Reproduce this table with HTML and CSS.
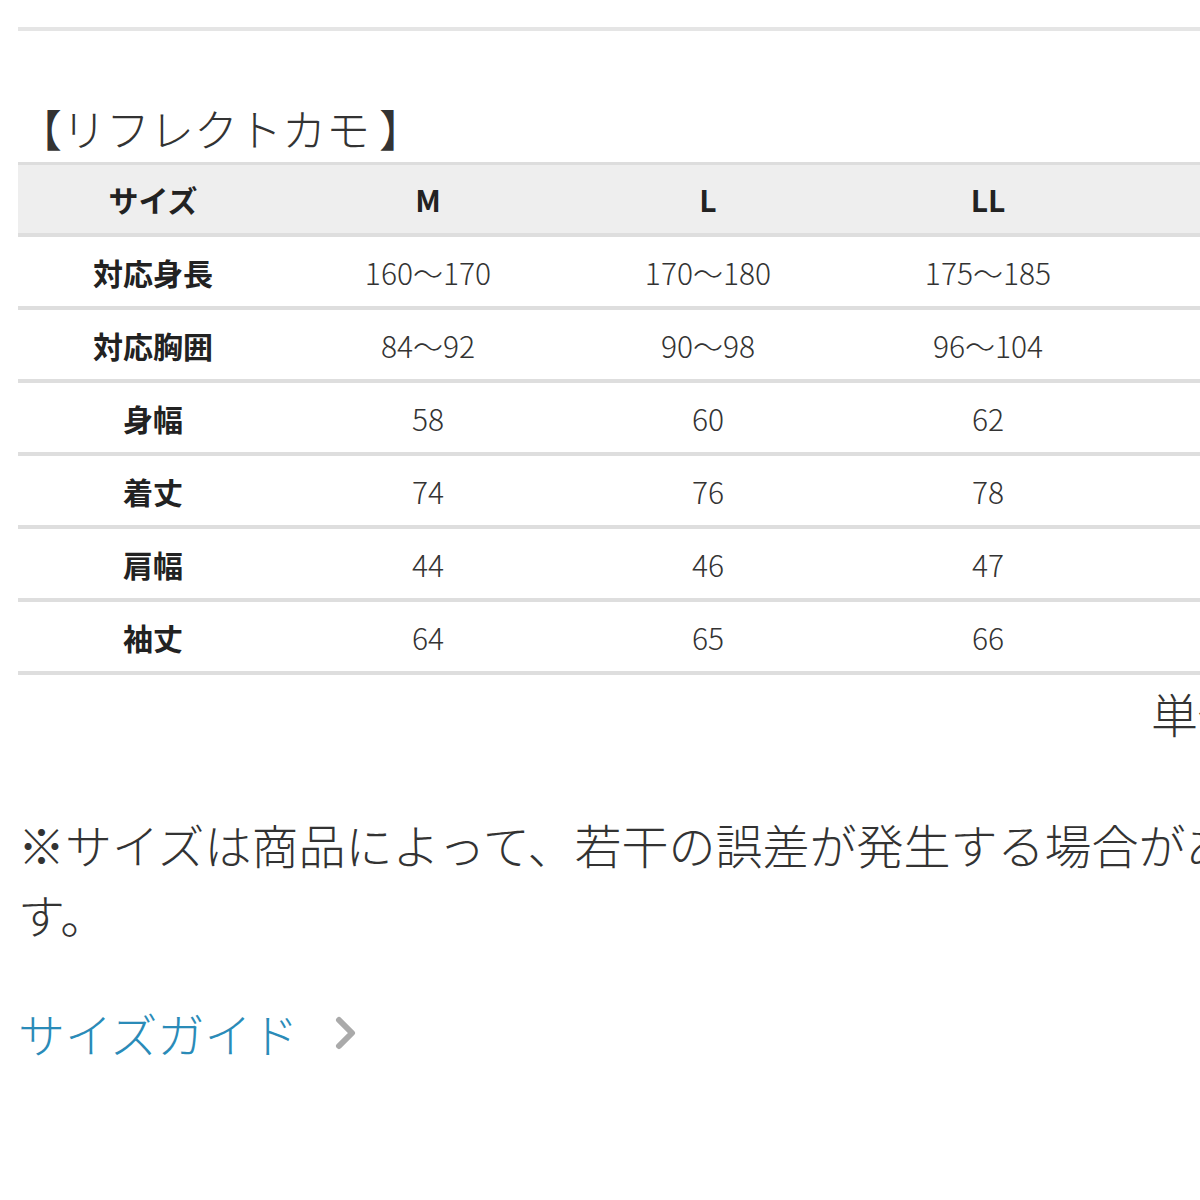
FILE: index.html
```html
<!DOCTYPE html>
<html lang="ja">
<head>
<meta charset="utf-8">
<title>サイズ表</title>
<link rel="stylesheet" href="styles.css">
</head>
<body>
<div class="page">
  <div class="top-rule"></div>
  <h2 class="title"><span class="br-open">【</span>リフレクトカモ<span class="br-close">】</span></h2>
  <table class="size-table">
    <colgroup>
      <col class="c-label"><col class="c-val"><col class="c-val"><col class="c-val"><col class="c-val">
    </colgroup>
    <thead>
      <tr><th>サイズ</th><th>M</th><th>L</th><th>LL</th><th></th></tr>
    </thead>
    <tbody>
      <tr><th>対応身長</th><td>160〜170</td><td>170〜180</td><td>175〜185</td><td></td></tr>
      <tr><th>対応胸囲</th><td>84〜92</td><td>90〜98</td><td>96〜104</td><td></td></tr>
      <tr><th>身幅</th><td>58</td><td>60</td><td>62</td><td></td></tr>
      <tr><th>着丈</th><td>74</td><td>76</td><td>78</td><td></td></tr>
      <tr><th>肩幅</th><td>44</td><td>46</td><td>47</td><td></td></tr>
      <tr><th>袖丈</th><td>64</td><td>65</td><td>66</td><td></td></tr>
    </tbody>
  </table>
  <div class="unit">単位：cm</div>
  <p class="note">※サイズは商品によって、若干の誤差が発生する場合があります。</p>
  <a class="guide" href="#">サイズガイド<svg class="chev" width="26" height="36" viewBox="0 0 26 36"><path d="M6 5 L19 18 L6 31" fill="none" stroke="#aaaaaa" stroke-width="6" stroke-linecap="round" stroke-linejoin="round"/></svg></a>
</div>
</body>
</html>
```
FILE: styles.css
```css
html, body {
  margin: 0;
  padding: 0;
  background: #ffffff;
  overflow: hidden;
}
body {
  width: 1200px;
  font-family: "Noto Sans CJK JP", "Noto Sans", sans-serif;
  color: #333333;
}
.page {
  padding-left: 18px;
  width: 1340px;
}
.top-rule {
  margin-top: 27px;
  height: 4px;
  background: #e5e5e5;
}
.title {
  margin: 66px 0 0 0;
  font-size: 44px;
  line-height: 62px;
  font-weight: 300;
  color: #333;
}
.br-close {
  margin-left: 9px;
}
.size-table {
  margin-top: 3px;
  width: 1390px;
  border-collapse: collapse;
  table-layout: fixed;
}
.c-label { width: 270px; }
.c-val { width: 280px; }
.size-table th,
.size-table td {
  height: 69px;
  padding: 0;
  text-align: center;
  vertical-align: middle;
  font-size: 30px;
  border-bottom: 4px solid #dedede;
}
.size-table thead th {
  background: #eeeeee;
  border-top: 3px solid #dddddd;
  font-weight: 700;
  color: #222;
  height: 68px;
}
.size-table tbody th {
  font-weight: 700;
  color: #222;
}
.size-table td {
  font-weight: 300;
  color: #333;
}
.unit {
  text-align: right;
  font-size: 47px;
  line-height: 76px;
  font-weight: 300;
}
.note {
  margin: 58px 0 0 0;
  font-size: 47px;
  line-height: 70px;
  font-weight: 300;
}
.guide {
  display: inline-flex;
  align-items: center;
  margin-top: 49px;
  font-size: 47px;
  line-height: 70px;
  font-weight: 300;
  color: #2a8bb8;
  text-decoration: none;
}
.chev {
  margin-left: 34px;
}
```
